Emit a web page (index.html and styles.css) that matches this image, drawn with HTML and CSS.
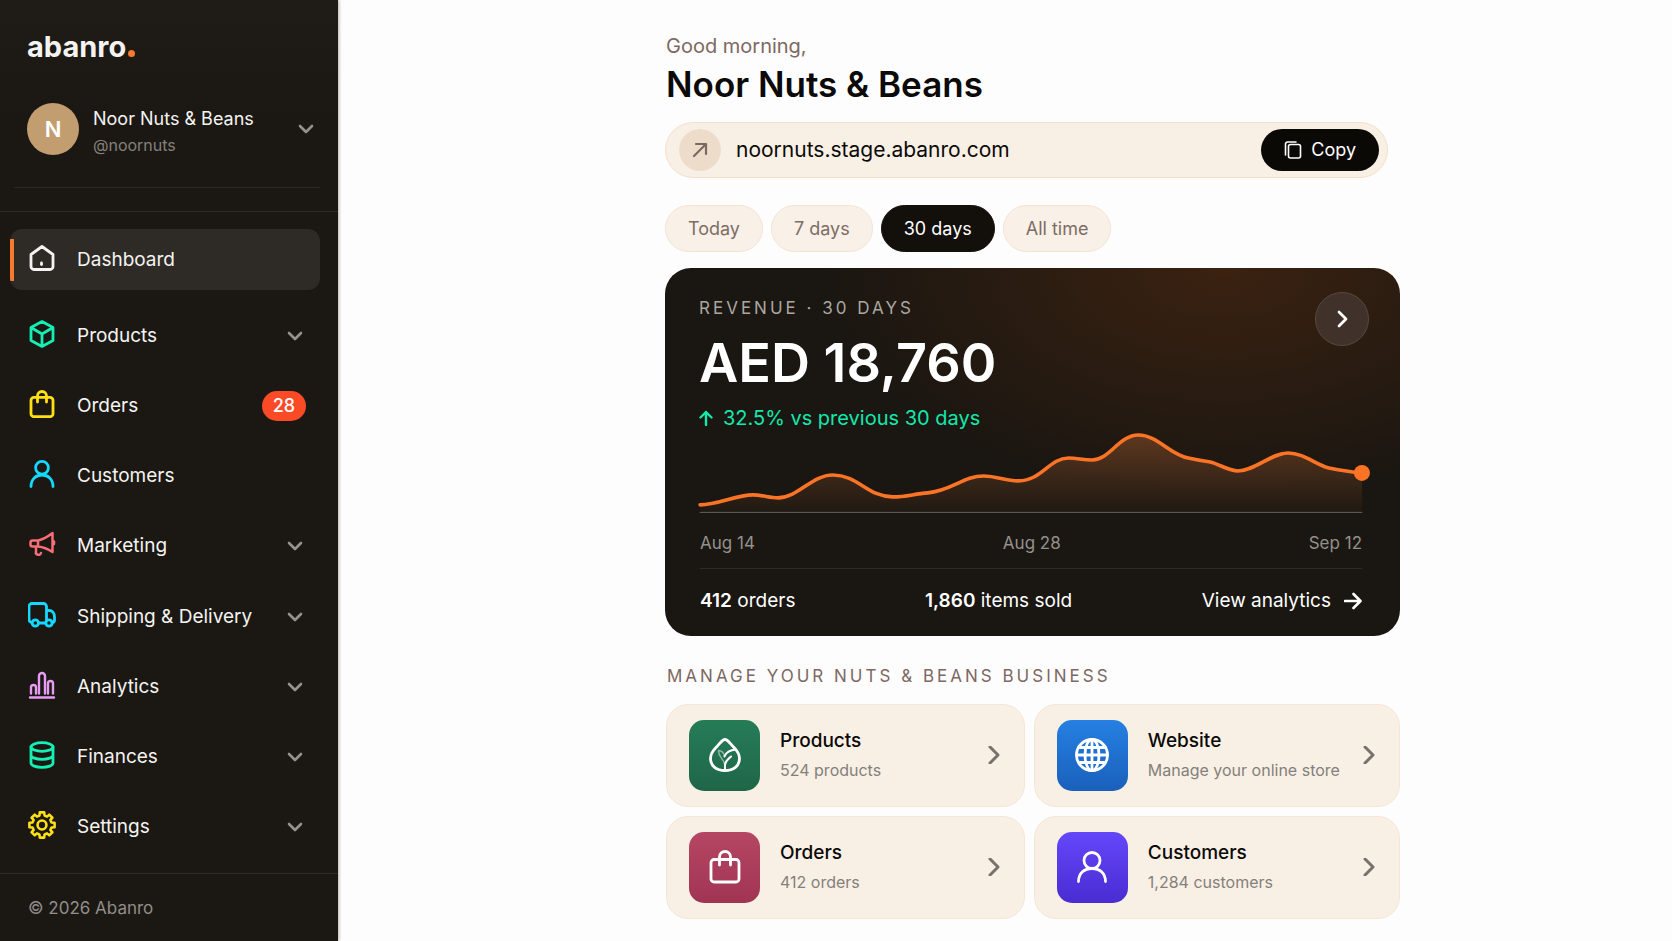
FILE: index.html
```
<!DOCTYPE html>
<html lang="en">
<head>
    <meta charset="UTF-8">
    <meta name="viewport" content="width=device-width, initial-scale=1.0">
    <title>Abanro Dashboard</title>
    <link rel="stylesheet" href="styles.css">
</head>
<body>
    <aside class="sidebar">
        <a href="#" class="logo">abanro<span class="logo-dot"></span></a>

        <button type="button" class="account">
            <span class="avatar">N</span>
            <span class="account-text">
                <span class="account-name">Noor Nuts &amp; Beans</span>
                <span class="account-handle">@noornuts</span>
            </span>
            <svg class="chevron" viewBox="0 0 16 16"><path d="M2 5l6 6 6-6"/></svg>
        </button>

        <nav class="nav">
            <a href="#" class="nav-item active">
                <svg class="nav-icon" viewBox="0 0 28 28"><path d="M14 2.5L25 10.5V22.5a3 3 0 0 1-3 3H6a3 3 0 0 1-3-3V10.5z"/><path d="M13.5 19v1.5"/></svg>
                <span class="nav-label">Dashboard</span>
            </a>
            <ul class="nav-list">
                <li><a href="#" class="nav-item">
                    <svg class="nav-icon green" viewBox="0 0 28 28"><path d="M14 1.6l11 5.9v13l-11 5.9-11-5.9v-13zM3 7.5L14 14l11-6.5M14 14v12"/></svg>
                    <span class="nav-label">Products</span>
                    <svg class="chevron" viewBox="0 0 16 16"><path d="M2 5l6 6 6-6"/></svg>
                </a></li>
                <li><a href="#" class="nav-item">
                    <svg class="nav-icon yellow" viewBox="0 0 28 28"><rect x="3" y="7.3" width="22" height="19.4" rx="3"/><path d="M9.5 12V6a4.500 4.500 0 0 1 9 0v6"/></svg>
                    <span class="nav-label">Orders</span>
                    <span class="badge">28</span>
                </a></li>
                <li><a href="#" class="nav-item">
                    <svg class="nav-icon cyan" viewBox="0 0 28 28"><circle cx="14" cy="7.8" r="6.4"/><path d="M3 26.5c0-7.500 5-11.500 11-11.500s11 4 11 11.500"/></svg>
                    <span class="nav-label">Customers</span>
                </a></li>
                <li><a href="#" class="nav-item">
                    <svg class="nav-icon pink" viewBox="0 0 28 28"><path d="M10 10.5H4.500a2 2 0 0 0-2 2v2a2 2 0 0 0 2 2H10zM10 10.5c5-1 10-4 14.500-7.500v19c-4.500-3-9.500-5-14.500-5.500M26 11.500v2.500M8 16.500v5a2.600 2.600 0 0 0 5 1.500"/></svg>
                    <span class="nav-label">Marketing</span>
                    <svg class="chevron" viewBox="0 0 16 16"><path d="M2 5l6 6 6-6"/></svg>
                </a></li>
                <li><a href="#" class="nav-item">
                    <svg class="nav-icon cyan" viewBox="0 0 28 28"><path d="M4 21.500a3 3 0 0 1-3-3V5.500a3 3 0 0 1 3-3h11.500a3 3 0 0 1 3 3V20M18.500 9.500h2.500c3.500 0 5.500 3 5.500 6.500V19a2.500 2.500 0 0 1-2.500 2.500M10.500 22h7"/><circle cx="7.3" cy="22" r="3.2"/><circle cx="21" cy="22" r="3.2"/></svg>
                    <span class="nav-label">Shipping &amp; Delivery</span>
                    <svg class="chevron" viewBox="0 0 16 16"><path d="M2 5l6 6 6-6"/></svg>
                </a></li>
                <li><a href="#" class="nav-item">
                    <svg class="nav-icon purple" viewBox="0 0 28 28"><path d="M2 26.500h24M3 22.500v-6a2.500 2.500 0 0 1 5 0v6M11 22.500V5a3 3 0 0 1 6 0v17.500M20 22.500v-10a2.500 2.500 0 0 1 5 0v10"/></svg>
                    <span class="nav-label">Analytics</span>
                    <svg class="chevron" viewBox="0 0 16 16"><path d="M2 5l6 6 6-6"/></svg>
                </a></li>
                <li><a href="#" class="nav-item">
                    <svg class="nav-icon green" viewBox="0 0 28 28"><ellipse cx="14" cy="6" rx="11" ry="4.3"/><path d="M3 6v16c0 2.500 5 4.300 11 4.300s11-1.800 11-4.300V6M3 14c0 2.500 5 4.300 11 4.300s11-1.800 11-4.300"/></svg>
                    <span class="nav-label">Finances</span>
                    <svg class="chevron" viewBox="0 0 16 16"><path d="M2 5l6 6 6-6"/></svg>
                </a></li>
                <li><a href="#" class="nav-item">
                    <svg class="nav-icon gear yellow" viewBox="-12 -12 24 24"><path d="M-1.9-10.8H1.9L2.2-8.15 4.35-7.18 6.2-8.9 8.9-6.2 7.18-4.35 8.15-2.2 10.8-1.9V1.9L8.15 2.2 7.18 4.35 8.9 6.2 6.2 8.9 4.35 7.18 2.2 8.15 1.9 10.8H-1.9L-2.2 8.15-4.35 7.18-6.2 8.9-8.9 6.2-7.18 4.35-8.15 2.2-10.8 1.9V-1.9L-8.15-2.2-7.18-4.35-8.9-6.2-6.2-8.9-4.35-7.18-2.2-8.15z"/><circle r="3.8"/></svg>
                    <span class="nav-label">Settings</span>
                    <svg class="chevron" viewBox="0 0 16 16"><path d="M2 5l6 6 6-6"/></svg>
                </a></li>
            </ul>
        </nav>

        <footer class="sidebar-footer">© 2026 Abanro</footer>
    </aside>

    <main class="main">
        <div class="content">
            <p class="greeting">Good morning,</p>
            <h1>Noor Nuts &amp; Beans</h1>

            <div class="url-bar">
                <span class="url-icon">
                    <svg viewBox="0 0 16 16"><path d="M2 14L14 2M4 2h10v10"/></svg>
                </span>
                <a href="#" class="url">noornuts.stage.abanro.com</a>
                <button type="button" class="copy">
                    <svg viewBox="0 0 18 18"><rect x="4.5" y="3.5" width="12" height="13.5" rx="2"/><path d="M1.5 14V3a2 2 0 0 1 2-2H12"/></svg>
                    Copy
                </button>
            </div>

            <div class="ranges">
                <button type="button" class="range">Today</button>
                <button type="button" class="range">7 days</button>
                <button type="button" class="range selected">30 days</button>
                <button type="button" class="range">All time</button>
            </div>

            <section class="revenue">
                <div class="revenue-head">
                    <div>
                        <h2 class="revenue-label">Revenue · 30 days</h2>
                        <p class="amount">AED 18,760</p>
                        <p class="change">
                            <svg viewBox="0 0 14 16"><path d="M7 15V2M1.5 7.5L7 2l5.5 5.5"/></svg>
                            32.5% vs previous 30 days
                        </p>
                    </div>
                    <button type="button" class="round" aria-label="Open revenue">
                        <svg viewBox="0 0 18 18"><path d="M6 2l7 7-7 7"/></svg>
                    </button>
                </div>
                <div class="revenue-body">
                    <svg class="chart" viewBox="0 5 663 83">
                        <defs>
                            <linearGradient id="area" x1="0" y1="0" x2="0" y2="1">
                                <stop offset="0" stop-color="#ff8a45" stop-opacity="0.27"/>
                                <stop offset="1" stop-color="#ff8a45" stop-opacity="0.03"/>
                            </linearGradient>
                        </defs>
                        <path class="chart-area" d="M0 80C18 80 36 70 53 70C62 70 70 73 78 73C98 73 112 50 133 50C158 50 168 72 193 72C207 72 214 69 228 68C252 66 264 51 284 51C297 51 306 56 319 56C342 56 350 33 369 33C378 33 383 35 393 35C410 35 420 10 439 10C458 10 471 30 489 33C498 35 504 36 511 37C520 39 529 46 539 46C556 46 572 28 589 28C605 28 617 40 630 43C640 45 652 47 663 48V87H0z"/>
                        <path class="chart-base" d="M0 87.5H663"/>
                        <path class="chart-line" d="M0 80C18 80 36 70 53 70C62 70 70 73 78 73C98 73 112 50 133 50C158 50 168 72 193 72C207 72 214 69 228 68C252 66 264 51 284 51C297 51 306 56 319 56C342 56 350 33 369 33C378 33 383 35 393 35C410 35 420 10 439 10C458 10 471 30 489 33C498 35 504 36 511 37C520 39 529 46 539 46C556 46 572 28 589 28C605 28 617 40 630 43C640 45 652 47 663 48"/>
                        <circle class="chart-dot" cx="663" cy="48" r="8"/>
                    </svg>
                    <div class="dates">
                        <span>Aug 14</span>
                        <span>Aug 28</span>
                        <span>Sep 12</span>
                    </div>
                    <div class="stats">
                        <span><strong>412</strong> orders</span>
                        <span><strong>1,860</strong> items sold</span>
                        <a href="#" class="analytics-link">View analytics
                            <svg viewBox="0 0 18 18"><path d="M1 9h15M9.5 2L16.5 9l-7 7"/></svg>
                        </a>
                    </div>
                </div>
            </section>

            <h2 class="section-title">Manage your nuts &amp; beans business</h2>

            <div class="tiles">
                <a href="#" class="tile">
                    <span class="tile-icon tile-green">
                        <svg viewBox="0 0 34 34"><path d="M17 1.5c-3 0-5 4-9 8-3 3-5.500 6.500-5.500 11 0 7.500 6 12 14.500 12s14.500-4.500 14.500-12c0-4.500-2.500-8-5.500-11-4-4-6-8-9-8z"/><path class="vein" d="M17 31.500v-4c0-4 2.500-6 6-9M28 11.500c-6 .5-10 3-11.500 7"/><path class="vein faint" d="M10.500 12.500c-.5 6 5 8 6.500 14.500M11 12.500c3 .5 5 3 5.500 6"/></svg>
                    </span>
                    <span class="tile-text">
                        <span class="tile-title">Products</span>
                        <span class="tile-sub">524 products</span>
                    </span>
                    <svg class="tile-arrow" viewBox="0 0 18 18"><path d="M5 1l8 8-8 8"/></svg>
                </a>
                <a href="#" class="tile">
                    <span class="tile-icon tile-blue">
                        <svg viewBox="0 0 34 34"><circle cx="17" cy="17" r="15.5"/><ellipse cx="17" cy="17" rx="7" ry="15.5"/><path d="M17 1.5v31M1.5 17h31M4 9.5h26M4 24.5h26"/></svg>
                    </span>
                    <span class="tile-text">
                        <span class="tile-title">Website</span>
                        <span class="tile-sub">Manage your online store</span>
                    </span>
                    <svg class="tile-arrow" viewBox="0 0 18 18"><path d="M5 1l8 8-8 8"/></svg>
                </a>
                <a href="#" class="tile">
                    <span class="tile-icon tile-red">
                        <svg viewBox="0 0 34 34"><rect x="3" y="9.5" width="28" height="22.5" rx="3"/><path d="M11.5 15V7a5.500 5.500 0 0 1 11 0v8"/></svg>
                    </span>
                    <span class="tile-text">
                        <span class="tile-title">Orders</span>
                        <span class="tile-sub">412 orders</span>
                    </span>
                    <svg class="tile-arrow" viewBox="0 0 18 18"><path d="M5 1l8 8-8 8"/></svg>
                </a>
                <a href="#" class="tile">
                    <span class="tile-icon tile-violet">
                        <svg viewBox="0 0 34 34"><circle cx="17" cy="10.5" r="8"/><path d="M3.5 31.5c0-8.500 6-13 13.500-13s13.500 4.500 13.500 13"/></svg>
                    </span>
                    <span class="tile-text">
                        <span class="tile-title">Customers</span>
                        <span class="tile-sub">1,284 customers</span>
                    </span>
                    <svg class="tile-arrow" viewBox="0 0 18 18"><path d="M5 1l8 8-8 8"/></svg>
                </a>
            </div>
        </div>
    </main>
</body>
</html>
```
FILE: styles.css
```
* {
    box-sizing: border-box;
}

body {
    display: flex;
    min-height: 100vh;
    margin: 0;
    background: #fdfdfd;
    color: #0b0a08;
    font-family: Inter, "Liberation Sans", sans-serif;
    font-size: 19px;
    line-height: 24px;
}

a {
    color: inherit;
    text-decoration: none;
}

button {
    border: 0;
    padding: 0;
    background: none;
    color: inherit;
    font: inherit;
    cursor: pointer;
}

h1, h2, p, ul {
    margin: 0;
    padding: 0;
    font-weight: 400;
}

svg {
    flex: none;
    fill: none;
    stroke: currentColor;
    stroke-linecap: round;
    stroke-linejoin: round;
}

/* Sidebar */
.sidebar {
    display: flex;
    flex-direction: column;
    flex: none;
    width: 338px;
    background: linear-gradient(#1f1c17, #1b1813 120px);
    color: #f4f3f1;
    box-shadow: 1px 0 3px rgba(0, 0, 0, 0.3);
}

.logo {
    display: flex;
    align-items: baseline;
    gap: 2px;
    padding: 29px 27px 0;
    font-size: 29px;
    font-weight: 700;
    line-height: 36px;
}

.logo-dot {
    width: 7px;
    height: 7px;
    border-radius: 50%;
    background: #f97a2c;
}

.account {
    display: flex;
    align-items: center;
    gap: 14px;
    margin: 36px 18px 0 14px;
    padding: 0 6px 30px 13px;
    border-bottom: 1px solid #2b2824;
    text-align: left;
}

.avatar {
    display: flex;
    align-items: center;
    justify-content: center;
    width: 52px;
    height: 52px;
    border-radius: 50%;
    background: #c29d6f;
    color: #fff;
    font-size: 22px;
    font-weight: 600;
}

.account-text {
    display: flex;
    flex: 1;
    flex-direction: column;
    gap: 2px;
    padding-top: 6px;
}

.account-name {
    font-size: 18px;
    white-space: nowrap;
}

.account-handle {
    color: #84807b;
    font-size: 16px;
}

.chevron {
    width: 16px;
    height: 16px;
    color: #96938f;
    stroke-width: 2.6;
}

.nav {
    display: flex;
    flex: 1;
    flex-direction: column;
    gap: 15px;
    margin-top: 23px;
    padding: 17px 18px 15px 10px;
    border-top: 1px solid #2f2c28;
}

.nav-list {
    display: flex;
    flex: 1;
    flex-direction: column;
    justify-content: space-between;
    list-style: none;
}

.nav-item {
    display: flex;
    align-items: center;
    gap: 21px;
    height: 61px;
    padding: 0 14px 0 18px;
    border-radius: 12px;
}

.nav-item .chevron {
    margin-right: 3px;
}

.nav-item.active {
    background: linear-gradient(90deg, #f97a2c 4px, transparent 4px) 0 50% / 100% 42px no-repeat, #2e2b27;
}

.nav-icon {
    width: 28px;
    height: 28px;
    margin-bottom: 4px;
    stroke-width: 2.8;
}

.gear {
    stroke-width: 2.2;
}

.nav-label {
    flex: 1;
    white-space: nowrap;
}

.green {
    color: #14f0b4;
}

.yellow {
    color: #ffe014;
}

.cyan {
    color: #14d8ff;
}

.pink {
    color: #f76d78;
    stroke-width: 2.5;
}

.purple {
    color: #e79bf5;
    stroke-width: 2.4;
}

.badge {
    min-width: 44px;
    padding: 3px 10px;
    border-radius: 15px;
    background: #fb4a26;
    color: #fff;
    font-size: 18px;
    font-weight: 500;
    text-align: center;
}

.sidebar-footer {
    padding: 22px 28px 21px;
    border-top: 1px solid #2f2c28;
    color: #918e8a;
    font-size: 17px;
}

/* Main column */
.main {
    display: flex;
    flex: 1;
    justify-content: center;
    padding: 34px 24px 22px 79px;
}

.content {
    width: 100%;
    max-width: 735px;
}

.greeting {
    padding-left: 1px;
    color: #7d6863;
    font-size: 20px;
}

h1 {
    padding-left: 1px;
    font-size: 35px;
    font-weight: 600;
    line-height: 53px;
}

.url-bar {
    display: flex;
    align-items: center;
    margin: 11px 12px 0 0;
    padding: 6px 8px 6px 13px;
    border: 1px solid #f2e0cb;
    border-radius: 28px;
    background: #f9f0e5;
}

.url-icon {
    display: flex;
    align-items: center;
    justify-content: center;
    width: 42px;
    height: 42px;
    border-radius: 50%;
    background: #eedccb;
    color: #7a6a5f;
}

.url-icon svg {
    width: 16px;
    height: 16px;
    stroke-width: 2.2;
}

.url {
    flex: 1;
    padding-left: 15px;
    font-size: 21px;
}

.copy {
    display: flex;
    align-items: center;
    gap: 9px;
    height: 42px;
    padding: 0 23px;
    border-radius: 21px;
    background: #0b0906;
    color: #fff;
    font-size: 18px;
}

.copy svg {
    width: 18px;
    height: 18px;
    stroke-width: 1.6;
}

.ranges {
    display: flex;
    flex-wrap: wrap;
    gap: 8px;
    margin-top: 27px;
}

.range {
    height: 47px;
    padding: 0 22px;
    border: 1px solid #f4e3d2;
    border-radius: 24px;
    background: #f9f0e7;
    color: #7d6d65;
    font-size: 18px;
}

.range.selected {
    border-color: #130f0a;
    background: #130f0a;
    color: #fff;
}

/* Revenue card */
.revenue {
    margin-top: 16px;
    border-radius: 26px;
    background: radial-gradient(ellipse 400px 230px at 76% 0, #3b2211, transparent), #1a1611;
    color: #fff;
}

.revenue-head {
    display: flex;
    justify-content: space-between;
    padding: 24px 31px 0 34px;
}

.revenue-label {
    padding-top: 4px;
    color: #aaa7a3;
    font-size: 17px;
    letter-spacing: 3px;
    text-transform: uppercase;
}

.amount {
    font-size: 54px;
    font-weight: 600;
    line-height: 86px;
}

.change {
    display: flex;
    align-items: center;
    gap: 10px;
    color: #14e8ac;
    font-size: 20px;
}

.change svg {
    width: 14px;
    height: 16px;
    stroke-width: 2.4;
}

.round {
    display: flex;
    align-items: center;
    justify-content: center;
    width: 54px;
    height: 54px;
    border: 1px solid #57483d;
    border-radius: 50%;
    background: #40322a;
}

.round svg {
    width: 18px;
    height: 18px;
    stroke-width: 2.8;
}

.revenue-body {
    padding: 0 38px 0 35px;
}

.chart {
    display: block;
    width: 100%;
    overflow: visible;
}

.chart-area {
    fill: url(#area);
    stroke: none;
}

.chart-base {
    stroke: #65625e;
}

.chart-line {
    stroke: #fb7426;
    stroke-width: 3.6;
}

.chart-dot {
    fill: #fb7426;
    stroke: none;
}

.dates {
    display: flex;
    justify-content: space-between;
    padding: 18px 0 13px;
    border-bottom: 1px solid #2f2c27;
    color: #94918d;
    font-size: 17px;
}

.stats {
    display: flex;
    justify-content: space-between;
    padding: 20px 0 23px;
}

.stats strong {
    font-weight: 600;
}

.analytics-link {
    display: flex;
    align-items: center;
    gap: 13px;
}

.analytics-link svg {
    width: 18px;
    height: 18px;
    stroke-width: 2.6;
}

/* Tiles */
.section-title {
    padding: 28px 0 16px 2px;
    color: #7d6863;
    font-size: 17px;
    letter-spacing: 3px;
    text-transform: uppercase;
}

.tiles {
    display: grid;
    grid-template-columns: minmax(0, 49fr) minmax(0, 50fr);
    gap: 9px;
    padding-left: 1px;
}

.tile {
    display: flex;
    align-items: center;
    gap: 20px;
    padding: 15px 21px 15px 22px;
    border: 1px solid #f5e6d6;
    border-radius: 22px;
    background: #f9f0e5;
}

.tile-icon {
    display: flex;
    align-items: center;
    justify-content: center;
    width: 71px;
    height: 71px;
    border-radius: 15px;
    color: #fff;
}

.tile-icon svg {
    width: 34px;
    height: 34px;
    stroke-width: 2.8;
}

.tile-icon .vein {
    stroke-width: 2;
}

.tile-icon .faint {
    stroke-width: 1.4;
    opacity: 0.5;
}

.tile-green {
    background: linear-gradient(#267c58, #1f6648);
}

.tile-blue {
    background: linear-gradient(#2580e2, #1a60bb);
}

.tile-red {
    background: linear-gradient(#b54664, #a03553);
}

.tile-violet {
    background: linear-gradient(#6447fa, #4a2cd2);
}

.tile-text {
    display: flex;
    flex: 1;
    flex-direction: column;
    gap: 5px;
}

.tile-title {
    font-weight: 500;
}

.tile-sub {
    color: #84807b;
    font-size: 16px;
    white-space: nowrap;
}

.tile-arrow {
    width: 18px;
    height: 18px;
    color: #76726d;
    stroke-width: 3;
}
```
